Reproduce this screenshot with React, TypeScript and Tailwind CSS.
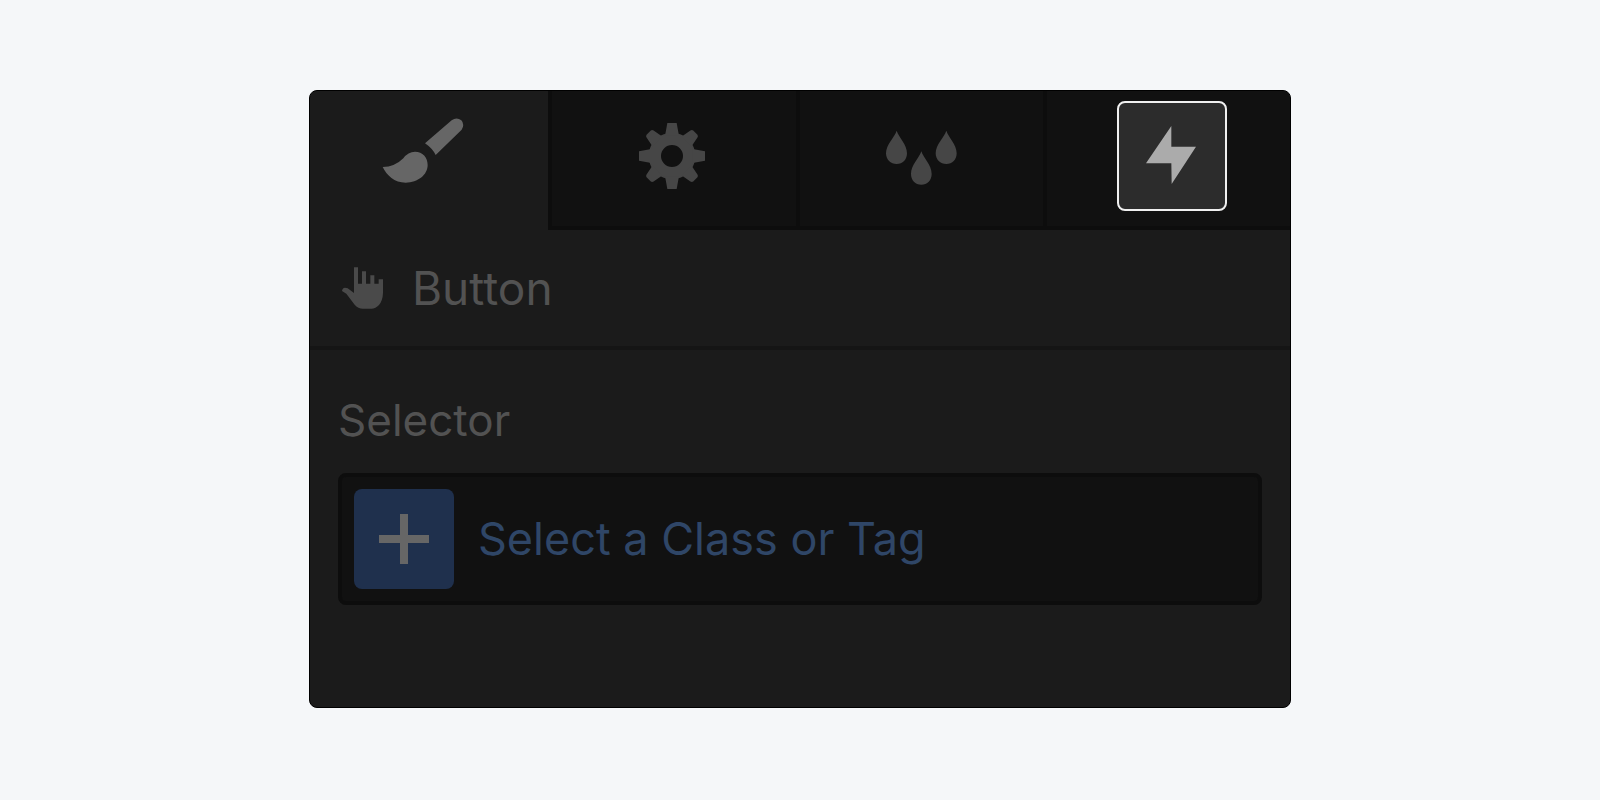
import React from "react";
import { useState } from "react";

const BrushIcon = () => (
  <svg width="94" height="76" viewBox="0 0 282 228" fill="currentColor" aria-hidden="true">
    <path d="M129 76 L209 7 Q224 -4 238 7 Q249 19 239 35 L161 111 Q151 91 129 76Z" />
    <path d="M2 147 Q38 147 64 121 Q78 101 99 101 C122 101 137 118 137 141 C137 170 108 194 71 194 C37 194 14 172 2 147Z" />
  </svg>
);

const gearTeeth = [0, 90, 180, 270];
const roundTeeth = [45, 135, 225, 315];

const GearIcon = () => (
  <svg width="66" height="66" viewBox="-99 -99 198 198" fill="currentColor" aria-hidden="true">
    <path
      fillRule="evenodd"
      d="M0 -70 A70 70 0 1 1 0 70 A70 70 0 1 1 0 -70Z M0 -33 A33 33 0 1 0 0 33 A33 33 0 1 0 0 -33Z"
    />
    {gearTeeth.map((angle) => (
      <path
        key={angle}
        transform={`rotate(${angle})`}
        d="M-14 -99 L14 -99 L20 -66 Q22 -62 28 -62 L-28 -62 Q-22 -62 -20 -66Z"
      />
    ))}
    {roundTeeth.map((angle) => (
      <path
        key={angle}
        transform={`rotate(${angle})`}
        d="M-9 -99 L9 -99 Q14 -98 15 -93 L20 -66 Q22 -62 28 -62 L-28 -62 Q-22 -62 -20 -66 L-15 -93 Q-14 -98 -9 -99Z"
      />
    ))}
  </svg>
);

const DropsIcon = () => (
  <svg width="75" height="58" viewBox="0 0 225 174" fill="currentColor" aria-hidden="true">
    <path d="M44 11 C50 31 75 52 75 79 C75 98 62 111 44 111 C26 111 12 98 12 79 C12 52 38 31 44 11Z" />
    <path d="M193 11 C199 31 224 52 224 79 C224 98 211 111 193 111 C175 111 161 98 161 79 C161 52 187 31 193 11Z" />
    <path d="M118 73 C124 93 149 114 149 141 C149 160 136 173 118 173 C100 173 87 160 87 141 C87 114 112 93 118 73Z" />
  </svg>
);

const BoltIcon = () => (
  <svg width="50" height="58" viewBox="0 0 150 174" fill="currentColor" aria-hidden="true">
    <path d="M76 0 L76 62 L150 62 L77 174 L76 112 L0 112Z" />
  </svg>
);

const HandIcon = () => (
  <svg width="42" height="42" viewBox="0 0 126 126" fill="currentColor" aria-hidden="true">
    <path d="M36 1 H48 V50 H60 V13 H72 V50 H85 V25 H97 V50 H110 V37 H123 V78 Q122 101 111 114 Q101 125 88 125 H63 Q48 125 38 113 L13 80 L0 72 Q1 63 9 62 L17 64 L36 78Z" />
  </svg>
);

const PlusIcon = () => (
  <svg width="50" height="50" viewBox="0 0 50 50" fill="currentColor" aria-hidden="true">
    <path d="M21 0 H29 V21 H50 V29 H29 V50 H21 V29 H0 V21 H21Z" />
  </svg>
);

const App = () => {
  const [selector, setSelector] = useState("");

  return (
    <main className="min-h-screen bg-[#f5f7f9] px-4 py-[90px] font-['Inter',sans-serif] text-[44px] leading-[56px] text-[#525252]">
      <section className="mx-auto w-full max-w-[982px] overflow-hidden rounded-lg border border-black bg-[#1b1b1b]">
        <div role="tablist" className="grid h-[139px] grid-cols-[238fr_248fr_247fr_247fr]">
          <button
            role="tab"
            aria-selected="true"
            aria-label="Style"
            className="flex items-center justify-center pb-2.5 text-[#666666]"
          >
            <BrushIcon />
          </button>
          <button
            role="tab"
            aria-selected="false"
            aria-label="Settings"
            className="flex items-center justify-center bg-[#111111] pb-2.5 text-[#464646] shadow-[inset_4px_-4px_0_#0d0d0d]"
          >
            <GearIcon />
          </button>
          <button
            role="tab"
            aria-selected="false"
            aria-label="Style manager"
            className="flex items-center justify-center bg-[#111111] pb-2.5 text-[#464646] shadow-[inset_4px_-4px_0_#0d0d0d]"
          >
            <DropsIcon />
          </button>
          <button
            role="tab"
            aria-selected="false"
            aria-label="Interactions"
            className="flex items-center justify-center bg-[#111111] pb-2.5 pl-2.5 text-[#ababab] shadow-[inset_4px_-4px_0_#0d0d0d]"
          >
            <span className="flex size-[110px] items-center justify-center rounded-lg border-2 border-[#f0f0f0] bg-[#2c2c2c] pr-0.5 pb-0.5">
              <BoltIcon />
            </span>
          </button>
        </div>

        <div className="flex h-[120px] items-center gap-7 border-b-4 border-[#151515] px-8">
          <span className="text-[#4a4a4a]">
            <HandIcon />
          </span>
          <h1 className="text-[46px]">Button</h1>
        </div>

        <div className="px-7 pt-[42px] pb-[102px]">
          <label htmlFor="selector" className="block">
            Selector
          </label>
          <div className="mt-[25px] flex items-center gap-6 rounded-lg border-4 border-[#0d0d0d] bg-[#111111] p-3">
            <button
              aria-label="Add selector"
              className="flex size-[100px] shrink-0 items-center justify-center rounded-lg bg-[#1f304d] text-[#666666]"
            >
              <PlusIcon />
            </button>
            <input
              id="selector"
              type="text"
              className="w-full min-w-0 text-[45px] text-[#2f4667] outline-none placeholder:text-[#2f4667]"
              placeholder="Select a Class or Tag"
              value={selector}
              onChange={(e) => setSelector(e.target.value)}
            />
          </div>
        </div>
      </section>
    </main>
  );
};

export default App;
